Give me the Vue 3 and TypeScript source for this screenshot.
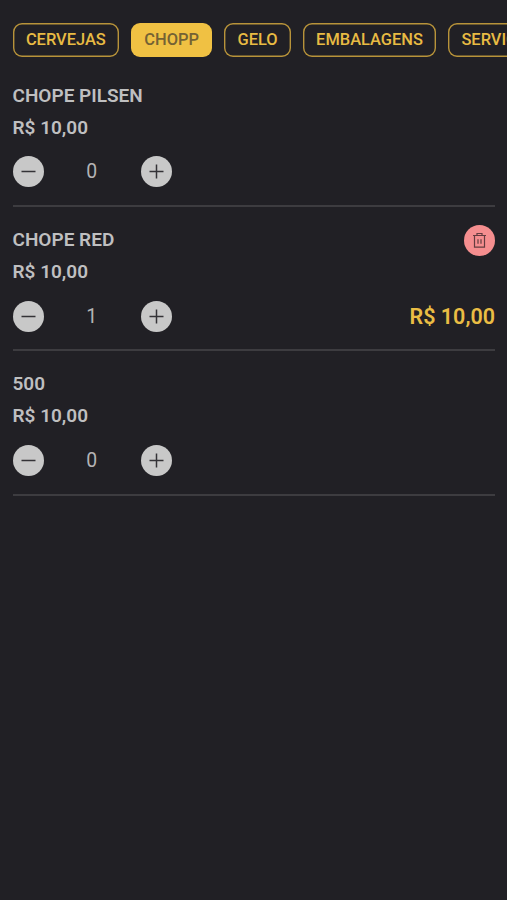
<script setup lang="ts">
import { computed, ref } from 'vue'

interface Product {
  id: number
  name: string
  price: number
  quantity: number
}

const categories = ['CERVEJAS', 'CHOPP', 'GELO', 'EMBALAGENS', 'SERVIÇOS']
const active = ref('CHOPP')

const products = ref<Product[]>([
  { id: 1, name: 'CHOPE PILSEN', price: 10, quantity: 0 },
  { id: 2, name: 'CHOPE RED', price: 10, quantity: 1 },
  { id: 3, name: '500', price: 10, quantity: 0 },
])

const visibleProducts = computed(() => (active.value === 'CHOPP' ? products.value : []))

function money(value: number): string {
  return 'R$ ' + value.toFixed(2).replace('.', ',')
}

function decrease(product: Product): void {
  product.quantity = Math.max(0, product.quantity - 1)
}
</script>

<template>
  <main class="screen">
    <nav class="categories">
      <button
        v-for="category in categories"
        :key="category"
        type="button"
        class="chip"
        :class="{ active: category === active }"
        @click="active = category"
      >
        {{ category }}
      </button>
    </nav>

    <ul class="products">
      <li v-for="product in visibleProducts" :key="product.id" class="product">
        <div class="info">
          <div class="name">{{ product.name }}</div>
          <div class="price">{{ money(product.price) }}</div>
          <div class="stepper">
            <button type="button" class="round" @click="decrease(product)">
              <svg viewBox="0 0 31 31"><path d="M8.5 15.5h14" /></svg>
            </button>
            <span class="quantity">{{ product.quantity }}</span>
            <button type="button" class="round" @click="product.quantity++">
              <svg viewBox="0 0 31 31"><path d="M8.5 15.5h14M15.5 8.5v14" /></svg>
            </button>
          </div>
        </div>
        <div v-if="product.quantity > 0" class="summary">
          <button type="button" class="round remove" @click="product.quantity = 0">
            <svg viewBox="0 0 31 31">
              <path d="M9 10.5h13M13 10.5v-2h5v2M10.5 10.5v11.7h10V10.5M14 14.2v4.6M17 14.2v4.6" />
            </svg>
          </button>
          <span class="total">{{ money(product.price * product.quantity) }}</span>
        </div>
      </li>
    </ul>
  </main>
</template>

<style>
body {
  background: #212025;
}
</style>

<style scoped>
.screen {
  box-sizing: border-box;
  height: 900px;
  overflow: hidden;
  padding: 22.5px 12px 0 12.5px;
  background: #212025;
  color: #bfbfc0;
  font-family: Roboto, sans-serif;
}

button {
  font-family: inherit;
  padding: 0;
  border: 0;
  cursor: pointer;
}

.categories {
  display: flex;
  gap: 11.7px;
  margin-right: -12px;
  overflow: hidden;
}

.chip {
  box-sizing: border-box;
  flex: none;
  height: 34.5px;
  padding: 0 13.4px;
  border-radius: 9px;
  background: transparent;
  box-shadow: inset 0 0 0 1.4px #b8933a;
  color: #e8bb43;
  font-size: 16.45px;
  font-weight: 500;
  line-height: 34px;
}

.chip.active {
  background: #f0c143;
  box-shadow: none;
  color: #746234;
}

.products {
  margin: 6px 0 0;
  padding: 0;
  list-style: none;
}

.product {
  box-sizing: border-box;
  display: flex;
  justify-content: space-between;
  height: 144.2px;
  padding-top: 17px;
  border-bottom: 2px solid #3d3c40;
}

.name,
.price {
  height: 32px;
  font-size: 19px;
  font-weight: 600;
  line-height: 32px;
}

.stepper {
  display: flex;
  align-items: center;
  width: 159.5px;
  margin-top: 12.4px;
}

.round {
  flex: none;
  width: 31px;
  height: 31px;
  border-radius: 50%;
  background: #c8c8c8;
}

.round svg {
  display: block;
  width: 31px;
  height: 31px;
  fill: none;
  stroke: #343337;
  stroke-width: 1.5;
}

.quantity {
  flex: 1;
  color: #b4b4b5;
  font-size: 19.4px;
  line-height: 31px;
  text-align: center;
  text-indent: -1px;
}

.summary {
  display: flex;
  flex-direction: column;
  align-items: flex-end;
  justify-content: space-between;
  height: 107px;
  padding-top: 1px;
}

.remove {
  background: #f58e8f;
}

.remove svg {
  stroke: #633c3f;
  stroke-width: 1.2;
}

.total {
  color: #eabd44;
  font-size: 21.5px;
  font-weight: 600;
  line-height: 31px;
}
</style>
